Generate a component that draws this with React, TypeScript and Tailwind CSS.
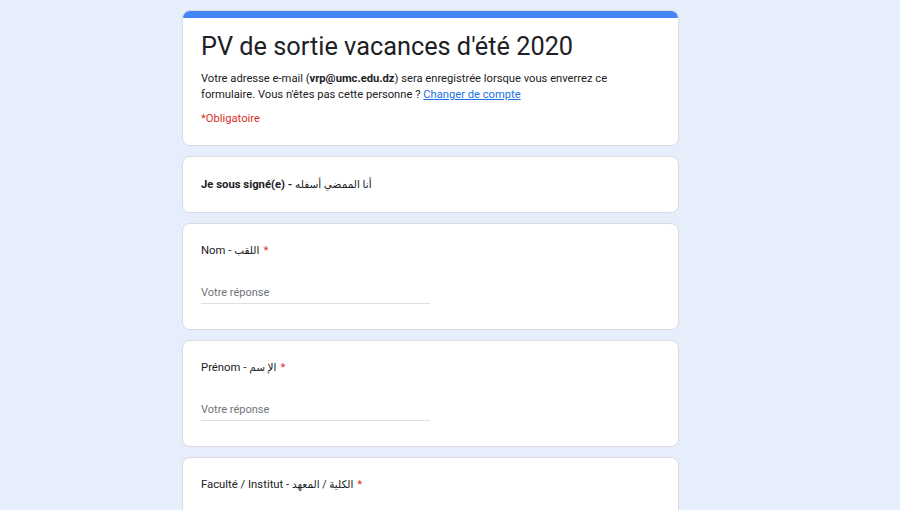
import React from "react";

const font = { fontFamily: "Roboto, 'DejaVu Sans', sans-serif" };

function Question({ label, arabic }: { label: string; arabic: string }) {
  return (
    <div className="bg-white rounded-lg border border-[#dadce0] pl-[18px] pr-6 pt-[17px] pb-[25px]">
      <div className="text-[11.3px] text-[#202124] leading-[20px] h-[20px]">
        {label} - <span className="text-[10.5px]">{arabic}</span>
        <span className="text-[#d93025] ml-1">*</span>
      </div>
      <div className="mt-[23px] w-[229px] border-b border-[#e0e0e0] pb-[1px] text-[11px] text-[#70757a] leading-[18px]">
        Votre réponse
      </div>
    </div>
  );
}

export default function App() {
  return (
    <div className="w-[900px] h-[510px] overflow-hidden bg-[#e6edfb] flex pl-[182px]" style={font}>
      <div className="w-[497px] pt-[10px] flex flex-col gap-[10px]">
        <div className="bg-white rounded-lg border border-[#dadce0] overflow-hidden shrink-0">
          <div className="h-[7px] bg-[#4285f4]" />
          <div className="pl-[18px] pr-6 pt-[12px] pb-[18px]">
            <div className="text-[25.3px] leading-[34px] text-[#202124]">PV de sortie vacances d'été 2020</div>
            <div className="mt-[7px] text-[11.2px] leading-[16px] text-[#202124]">
              Votre adresse e-mail (<b>vrp@umc.edu.dz</b>) sera enregistrée lorsque vous enverrez ce formulaire. Vous n'êtes pas cette personne ?{" "}
              <span className="text-[#1a73e8] underline">Changer de compte</span>
            </div>
            <div className="mt-[8px] text-[11.2px] leading-[16px] text-[#d93025]">*Obligatoire</div>
          </div>
        </div>
        <div className="bg-white rounded-lg border border-[#dadce0] h-[57px] pl-[18px] flex items-center shrink-0">
          <div className="text-[11.3px] text-[#202124] pt-[1px]">
            <b>Je sous signé(e) - </b>
            <span className="text-[10.5px]">أنا الممضي أسفله</span>
          </div>
        </div>
        <div className="shrink-0"><Question label="Nom" arabic="اللقب" /></div>
        <div className="shrink-0"><Question label="Prénom" arabic="الإ سم" /></div>
        <div className="shrink-0"><Question label="Faculté / Institut" arabic="الكلية / المعهد" /></div>
      </div>
    </div>
  );
}
